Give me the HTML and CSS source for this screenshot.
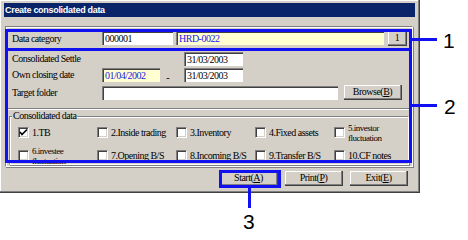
FILE: index.html
```html
<!DOCTYPE html>
<html>
<head>
    <title>Create consolidated data</title>
    <link rel="stylesheet" href="styles.css">
</head>
<body>
    <div class="screen">
        <div class="dialog">
            <div class="titlebar">Create consolidated data</div>
            <div class="panel">
                <div class="row row-category">
                    <span class="label">Data category</span>
                    <span class="field code">000001</span>
                    <span class="field name hint">HRD-0022</span>
                    <span class="btn btn-small">1</span>
                </div>
                <div class="rows">
                    <div class="row">
                        <span class="label">Consolidated Settle</span>
                        <span class="spacer"></span>
                        <span class="field date">31/03/2003</span>
                    </div>
                    <div class="row">
                        <span class="label">Own closing date</span>
                        <span class="field date date-from hint">01/04/2002</span>
                        <span class="dash">-</span>
                        <span class="field date">31/03/2003</span>
                    </div>
                    <div class="row">
                        <span class="label">Target folder</span>
                        <span class="field folder"></span>
                        <span class="btn btn-browse">Browse(<u>B</u>)</span>
                    </div>
                </div>
                <div class="divider"></div>
                <div class="group">
                    <span class="group-title">Consolidated data</span>
                    <div class="checks">
                        <label class="check"><span class="box checked"><svg width="9" height="9" viewBox="0 0 9 9"><path d="M1 4 L3 6.5 L8 1.5" fill="none" stroke="#000" stroke-width="1.6"/></svg></span>1.TB</label>
                        <label class="check"><span class="box"></span>2.Inside trading</label>
                        <label class="check"><span class="box"></span>3.Inventory</label>
                        <label class="check"><span class="box"></span>4.Fixed assets</label>
                        <label class="check"><span class="box"></span><span class="wrap">5.investor fluctuation</span></label>
                        <label class="check"><span class="box"></span><span class="wrap">6.investee fluctuation</span></label>
                        <label class="check"><span class="box"></span>7.Opening B/S</label>
                        <label class="check"><span class="box"></span>8.Incoming B/S</label>
                        <label class="check"><span class="box"></span>9.Transfer B/S</label>
                        <label class="check"><span class="box"></span>10.CF notes</label>
                    </div>
                </div>
            </div>
            <div class="actions">
                <span class="btn">Start(<u>A</u>)</span>
                <span class="btn">Print(<u>P</u>)</span>
                <span class="btn">Exit(<u>E</u>)</span>
            </div>
        </div>

        <!-- callouts drawn over the dialog -->
        <div class="mark mark-1"></div>
        <div class="mark mark-2"></div>
        <div class="mark mark-3"></div>
        <div class="lead lead-1"></div>
        <div class="lead lead-2"></div>
        <div class="lead lead-3"></div>
        <span class="num num-1">1</span>
        <span class="num num-2">2</span>
        <span class="num num-3">3</span>
    </div>
</body>
</html>
```

FILE: styles.css
```css
body {
    margin: 0;
    background: #fff;
    font-family: "Liberation Serif", serif;
    font-size: 10px;
    color: #000;
}

.screen {
    position: relative;
    width: 468px;
    height: 240px;
}

.dialog {
    width: 420px;
    height: 193px;
    box-sizing: border-box;
    padding: 3px 4px 0 4px;
    background: #d4d0c8;
    border-right: 1px solid #404040;
    border-bottom: 1px solid #404040;
    box-shadow: inset -1px -1px 0 #808080, inset 1px 1px 0 #fff;
}

.titlebar {
    height: 14px;
    line-height: 14px;
    padding-left: 1px;
    background: #0a246a;
    color: #fff;
    font-family: "Liberation Sans", sans-serif;
    font-weight: bold;
    font-size: 9px;
    letter-spacing: -0.3px;
}

.panel {
    margin: 9px 2px 0 1px;
    height: 141px;
    box-sizing: border-box;
    border: 1px solid #808080;
    border-right-color: #fff;
    border-bottom-color: #fff;
    box-shadow: inset 1px 1px 0 #fff, 1px 1px 0 #808080;
}

.row {
    display: flex;
    align-items: center;
    height: 15px;
    padding-left: 6px;
}

.row-category {
    height: 22px;
    border-bottom: 1px solid #808080;
}

.rows {
    display: flex;
    flex-direction: column;
    gap: 1px;
    padding-top: 1px;
    height: 56px;
}

.rows .row:last-child {
    margin-top: 2px;
}

.label {
    width: 90px;
    flex: none;
    letter-spacing: -0.5px;
}

.field {
    height: 14px;
    line-height: 14px;
    box-sizing: border-box;
    background: #fff;
    border-top: 1px solid #808080;
    border-left: 1px solid #808080;
    box-shadow: inset 1px 1px 0 #404040;
    padding-left: 2px;
    letter-spacing: -0.5px;
}

.hint {
    background: #ffffd2;
    color: #2020e8;
}

.code { width: 71px; }
.name { width: 208px; margin-left: 3px; }
.date { width: 59px; }
.date-from { width: 58px; }
.spacer { width: 82px; }
.folder { width: 236px; }

.dash {
    width: 24px;
    text-align: center;
    padding-top: 6px;
    padding-right: 8px;
    box-sizing: border-box;
}

.btn {
    width: 58px;
    height: 15px;
    line-height: 14px;
    box-sizing: border-box;
    text-align: center;
    background: #d4d0c8;
    border-right: 1px solid #404040;
    border-bottom: 1px solid #404040;
    box-shadow: inset -1px -1px 0 #808080, inset 1px 1px 0 #fff;
    letter-spacing: -0.5px;
}

.btn-small {
    width: 19px;
    margin-left: 4px;
}

.btn-browse {
    margin-left: 6px;
}

.divider {
    margin-top: 1px;
    border-top: 1px solid #808080;
    border-bottom: 1px solid #fff;
}

.group {
    position: relative;
    margin: 6px 3px 0 3px;
    height: 47px;
    border: 1px solid #808080;
    border-right-color: #fff;
    border-bottom-color: #fff;
    box-shadow: inset 1px 1px 0 #fff, 1px 1px 0 #808080;
}

.group-title {
    position: absolute;
    left: 2px;
    top: -7px;
    padding: 0 1px;
    background: #d4d0c8;
    letter-spacing: -0.5px;
}

.checks {
    display: grid;
    grid-template-columns: repeat(5, 79px);
    grid-auto-rows: 23px;
    padding: 4px 0 0 8px;
}

.check {
    display: flex;
    align-items: center;
    gap: 3px;
    letter-spacing: -0.5px;
}

.box {
    width: 11px;
    height: 11px;
    flex: none;
    box-sizing: border-box;
    background: #fff;
    border-top: 1px solid #808080;
    border-left: 1px solid #808080;
    border-right: 1px solid #fff;
    border-bottom: 1px solid #fff;
    box-shadow: inset 1px 1px 0 #404040, inset -1px -1px 0 #d4d0c8;
    display: flex;
    align-items: center;
    justify-content: center;
}

.box svg {
    display: block;
}

.wrap {
    width: 60px;
    height: 20px;
    overflow: hidden;
    display: flex;
    align-items: center;
    font-size: 9px;
    line-height: 10px;
}

.actions {
    display: flex;
    justify-content: flex-end;
    gap: 7px;
    margin-top: 4px;
    padding-right: 7px;
}

/* callouts */
.mark {
    position: absolute;
    box-sizing: border-box;
    border: 3px solid #1010f0;
}

.mark-1 { left: 5px; top: 29px; width: 407px; height: 22px; }
.mark-2 { left: 5px; top: 48px; width: 407px; height: 115px; }
.mark-3 { left: 219px; top: 170px; width: 62px; height: 18px; }

.lead {
    position: absolute;
    background: #1010f0;
}

.lead-1 { left: 411px; top: 38px; width: 26px; height: 3px; }
.lead-2 { left: 411px; top: 104px; width: 26px; height: 3px; }
.lead-3 { left: 248px; top: 187px; width: 3px; height: 21px; }

.num {
    position: absolute;
    font-family: "Liberation Sans", sans-serif;
    font-size: 21px;
    line-height: 1;
}

.num-1 { left: 443px; top: 30px; }
.num-2 { left: 444px; top: 96px; }
.num-3 { left: 243px; top: 211px; }
```
